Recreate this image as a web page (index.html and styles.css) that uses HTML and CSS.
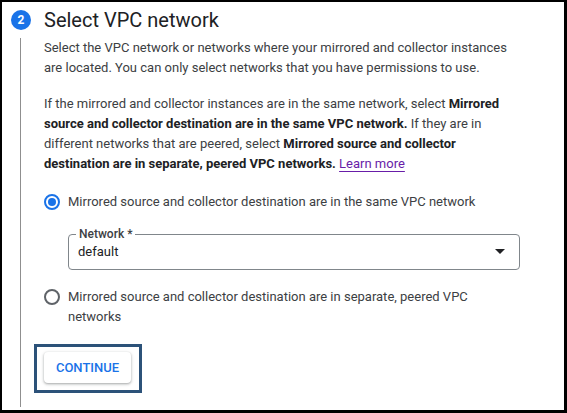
FILE: index.html
```html
<!DOCTYPE html>
<html lang="en">
<head>
<meta charset="utf-8">
<title>Select VPC network</title>
<link rel="stylesheet" href="styles.css">
</head>
<body>
<div class="frame">
  <div class="step-header">
    <span class="badge">2</span>
    <h2 class="title">Select VPC network</h2>
  </div>
  <div class="step-body">
    <p class="para">Select the VPC network or networks where your mirrored and collector instances are located. You can only select networks that you have permissions to use.</p>
    <p class="para">If the mirrored and collector instances are in the same network, select <b>Mirrored source and collector destination are in the same VPC network.</b> If they are in different networks that are peered, select <b>Mirrored source and collector destination are in separate, peered VPC networks.</b> <a class="link" href="#">Learn more</a></p>

    <div class="radio-row">
      <span class="radio radio-checked"></span>
      <span class="radio-label">Mirrored source and collector destination are in the same VPC network</span>
    </div>

    <fieldset class="field">
      <legend class="field-label">Network *</legend>
      <div class="field-value">
        <span>default</span>
        <svg class="caret" width="10" height="5" viewBox="0 0 10 5"><path d="M0 0 L10 0 L5 5 Z" fill="#202124"/></svg>
      </div>
    </fieldset>

    <div class="radio-row radio-row-2">
      <span class="radio"></span>
      <span class="radio-label">Mirrored source and collector destination are in separate, peered VPC networks</span>
    </div>

    <div class="highlight">
      <button class="btn" type="button">CONTINUE</button>
    </div>
  </div>
</div>
</body>
</html>
```

FILE: styles.css
```css
html, body {
  margin: 0;
  padding: 0;
  background: #ffffff;
}

.frame {
  box-sizing: border-box;
  width: 567px;
  height: 413px;
  border-style: solid;
  border-color: #000000;
  border-width: 2px 3px 3px 2px;
  background: #ffffff;
  font-family: Roboto, "Liberation Sans", Arial, sans-serif;
  color: #3c4043;
  overflow: hidden;
}

.step-header {
  display: flex;
  align-items: center;
  gap: 13px;
  padding: 7px 0 0 9px;
  height: 22px;
}

.badge {
  flex: none;
  width: 20px;
  height: 20px;
  border-radius: 50%;
  background: #1a73e8;
  color: #ffffff;
  font-size: 12px;
  font-weight: 700;
  line-height: 20px;
  text-align: center;
}

.title {
  margin: 0;
  font-size: 20px;
  font-weight: 400;
  line-height: 24px;
  color: #202124;
}

.step-body {
  margin: 7px 0 0 18px;
  border-left: 1px solid #8f8f8f;
  padding: 0 0 14px 23px;
  width: 476px;
}

.para {
  margin: 0 0 16px 0;
  font-size: 13px;
  line-height: 20px;
}

.para b {
  font-weight: 700;
  color: #202124;
}

.link {
  color: #681da8;
  text-decoration: underline;
  text-underline-offset: 3px;
}

.radio-row {
  display: flex;
  align-items: flex-start;
  gap: 8px;
  margin-top: 18px;
}

.radio-row-2 {
  margin-top: 17px;
}

.radio {
  flex: none;
  box-sizing: border-box;
  width: 16px;
  height: 16px;
  margin-top: 2px;
  border-radius: 50%;
  border: 2px solid #5f6368;
  display: flex;
  align-items: center;
  justify-content: center;
}

.radio-checked {
  border-color: #1a73e8;
}

.radio-checked::after {
  content: "";
  width: 8px;
  height: 8px;
  border-radius: 50%;
  background: #1a73e8;
}

.radio-label {
  font-size: 13px;
  line-height: 20px;
}

.field {
  margin: 15px 0 0 24px;
  padding: 0 14px 0 9px;
  border: 1px solid #80868b;
  border-radius: 4px;
  min-width: 0;
}

.field-label {
  padding: 0 3px;
  margin-left: -2px;
  font-size: 12px;
  font-weight: 500;
  line-height: 14px;
  color: #3c4043;
}

.field-value {
  box-sizing: border-box;
  display: flex;
  align-items: center;
  justify-content: space-between;
  height: 31px;
  margin-top: -3px;
  padding-bottom: 5px;
  font-size: 13px;
  color: #202124;
}

.caret {
  display: block;
}

.highlight {
  display: inline-block;
  margin: 17px 0 0 -10px;
  padding: 5px 8px 7px 7px;
  border: 3px solid #2c5279;
}

.btn {
  display: block;
  width: 87px;
  height: 31px;
  padding: 0;
  border: none;
  border-radius: 4px;
  background: #ffffff;
  box-shadow: 0 1px 2px rgba(60, 64, 67, 0.3), 0 1px 3px 1px rgba(60, 64, 67, 0.15);
  color: #1a73e8;
  font-family: Roboto, "Liberation Sans", Arial, sans-serif;
  font-size: 13px;
  font-weight: 500;
  letter-spacing: 0;
}
```
